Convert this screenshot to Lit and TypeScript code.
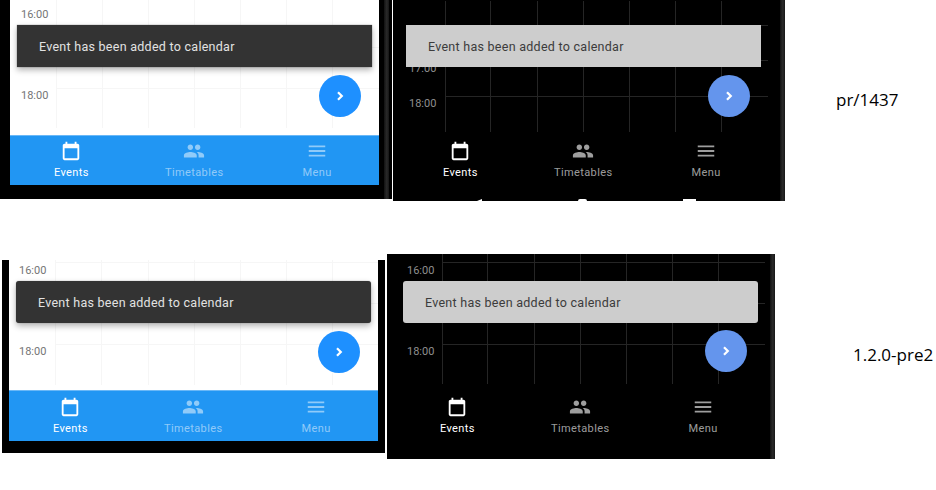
import { LitElement, html, css, svg } from "lit";
import { customElement, property } from "lit/decorators.js";

const calendar = svg`<path d="M19 4h-1V2h-2v2H8V2H6v2H5C3.9 4 3 4.9 3 6v14c0 1.1.9 2 2 2h14c1.1 0 2-.9 2-2V6c0-1.100-.9-2-2-2zm0 16H5V9h14v11z"/>`;
const people = svg`<path d="M16 11c1.660 0 2.990-1.340 2.990-3S17.660 5 16 5c-1.660 0-3 1.340-3 3s1.340 3 3 3zm-8 0c1.660 0 2.990-1.340 2.990-3S9.660 5 8 5C6.340 5 5 6.340 5 8s1.340 3 3 3zm0 2c-2.330 0-7 1.170-7 3.500V19h14v-2.500c0-2.330-4.670-3.500-7-3.500zm8 0c-.290 0-.620.020-.970.050 1.160.840 1.970 1.970 1.970 3.450V19h6v-2.500c0-2.330-4.670-3.500-7-3.500z"/>`;
const menu = svg`<path d="M3 18h18v-2H3v2zm0-5h18v-2H3v2zm0-7v2h18V6H3z"/>`;

interface Cfg {
  top: number; left: number; width: number; calH: number; navH: number; navLeft: number; padTop: number; lineH: number;
  edge: number; edgeRight: number;
  vlines: number[]; hlines: number[]; hLeft: number; hRight: number; times: [string, number][]; timeLeft: number;
  snackLeft: number; snackTop: number; fabLeft: number; fabTop: number;
}

const CONFIG: Record<string, Cfg> = {
  a: { top: 0, left: 10, width: 369, calH: 135, navH: 50, navLeft: 0, padTop: 4, lineH: 128, edge: 5, edgeRight: 3, vlines: [46, 92, 138, 184, 230, 276, 322], hlines: [47, 88], hLeft: 46, hRight: 0, times: [["16:00", 8], ["18:00", 89]], timeLeft: 11, snackLeft: 7, snackTop: 25, fabLeft: 309, fabTop: 75 },
  b: { top: 1, left: 5, width: 376, calH: 131, navH: 67, navLeft: 1, padTop: 8, lineH: 131, edge: 5, edgeRight: 0, vlines: [47, 92, 139, 185, 231, 277, 323], hlines: [24, 59, 95], hLeft: 47, hRight: 6, times: [["17:00", 61], ["18:00", 96]], timeLeft: 11, snackLeft: 8, snackTop: 24, fabLeft: 310, fabTop: 74 },
  c: { top: 0, left: 7, width: 369, calH: 130, navH: 51, navLeft: 0, padTop: 5, lineH: 125, edge: 0, edgeRight: 0, vlines: [46, 92, 139, 185, 231, 277, 323], hlines: [2, 43, 84], hLeft: 46, hRight: 0, times: [["16:00", 4], ["18:00", 85]], timeLeft: 10, snackLeft: 7, snackTop: 21, fabLeft: 309, fabTop: 71 },
  d: { top: 0, left: 2, width: 380, calH: 130, navH: 75, navLeft: 7, padTop: 12, lineH: 130, edge: 5, edgeRight: 0, vlines: [53, 98, 145, 191, 237, 283, 329], hlines: [8, 49, 90], hLeft: 53, hRight: 4, times: [["16:00", 10], ["18:00", 91]], timeLeft: 18, snackLeft: 14, snackTop: 27, fabLeft: 316, fabTop: 76 },
};

@customElement("phone-shot")
class PhoneShot extends LitElement {
  @property({ type: String }) variant = "a";
  @property({ type: Boolean }) dark = false;
  @property({ type: Boolean }) rounded = false;
  @property({ type: Boolean }) softkeys = false;

  static styles = css`
    :host { display: block; }
    .shot { display: flex; flex-direction: column; height: 100%; background: #000; position: relative; overflow: hidden; box-sizing: border-box; }
    .screen { flex: none; display: flex; flex-direction: column; position: relative; }
    .cal { flex: none; position: relative; overflow: hidden; background: #fff; }
    .dark .cal { background: #000; }
    .vline, .hline { position: absolute; background: #f6f6f6; }
    .dark .vline, .dark .hline { background: #252525; }
    .vline { width: 1px; top: 0; }
    .hline { height: 1px; }
    .time { position: absolute; font: 11px/14px Roboto, sans-serif; color: #757575; }
    .dark .time { color: #8f8f8f; }
    .snack { position: absolute; display: flex; align-items: center; box-sizing: border-box; width: 354.5px; height: 42px; padding: 2px 0 0 22px; background: #333; color: #e2e2e2; font: 12.500px/16px Roboto, sans-serif; letter-spacing: 0.270px; box-shadow: 0 3px 6px rgba(0,0,0,.3), 0 0 1px rgba(0,0,0,.5); }
    .dark .snack { background: #cdcdcd; color: #3c3c3c; box-shadow: none; }
    .rounded .snack { border-radius: 3px; }
    .fab { position: absolute; width: 42px; height: 42px; border-radius: 50%; background: #1e90ff; display: flex; align-items: center; justify-content: center; }
    .dark .fab { background: #6495ed; }
    .fab svg { width: 14px; height: 14px; fill: none; stroke: #fff; stroke-width: 2.200; }
    nav { flex: none; display: flex; box-sizing: border-box; width: 369px; padding-right: 0.500px; background: #2196f3; border-top: 1px solid #6ab8f7; }
    .dark nav { background: #000; border-top: 0; }
    .tab { flex: 1; display: flex; flex-direction: column; align-items: center; color: rgba(255,255,255,.5); font: 11px/14px Roboto, sans-serif; letter-spacing: 0.380px; }
    .dark .tab { color: rgba(255,255,255,.62); }
    .tab.on, .dark .tab.on { color: #fff; }
    .tab svg { width: 22px; height: 22px; fill: currentColor; margin-bottom: 4px; display: block; }
    .softkeys { flex: 1; position: relative; }
    .key { position: absolute; top: 0; height: 2px; background: #fff; }
    .back { left: 79px; width: 5px; clip-path: polygon(100% 0, 100% 100%, 0 100%); }
    .home { left: 180px; width: 9px; border-radius: 5px 5px 0 0; }
    .recent { left: 285px; width: 13px; }
    .edge { position: absolute; top: 0; bottom: 0; background: linear-gradient(90deg, #111, #2a2a2a 55%, #161616); }
  `;

  render() {
    const c = CONFIG[this.variant];
    const classes = `shot ${this.dark ? "dark" : ""} ${this.rounded ? "rounded" : ""}`;
    return html`<div class=${classes} style="padding:${c.top}px 0 0 ${c.left}px">
      <div class="screen" style="width:${c.width}px">
        <div class="cal" style="height:${c.calH}px">
          ${c.vlines.map((x) => html`<div class="vline" style="left:${x}px;height:${c.lineH}px"></div>`)}
          ${c.hlines.map((y) => html`<div class="hline" style="top:${y}px;left:${c.hLeft}px;right:${c.hRight}px"></div>`)}
          ${c.times.map((t) => html`<div class="time" style="left:${c.timeLeft}px;top:${t[1]}px">${t[0]}</div>`)}
        </div>
        <div class="snack" style="left:${c.snackLeft}px;top:${c.snackTop}px">Event has been added to calendar</div>
        <div class="fab" style="left:${c.fabLeft}px;top:${c.fabTop}px">
          <svg viewBox="0 0 14 14"><path d="M5 3.200 8.800 7 5 10.800"/></svg>
        </div>
        <nav style="height:${c.navH}px;margin-left:${c.navLeft}px;padding-top:${c.padTop}px">
          <div class="tab on"><svg viewBox="0 0 24 24">${calendar}</svg>Events</div>
          <div class="tab"><svg viewBox="0 0 24 24">${people}</svg>Timetables</div>
          <div class="tab"><svg viewBox="0 0 24 24">${menu}</svg>Menu</div>
        </nav>
      </div>
      ${this.softkeys
        ? html`<div class="softkeys">
            <div class="key back"></div>
            <div class="key home"></div>
            <div class="key recent"></div>
          </div>`
        : ""}
      ${c.edge ? html`<div class="edge" style="width:${c.edge}px;right:${c.edgeRight}px"></div>` : ""}
    </div>`;
  }
}

@customElement("app-root")
class AppRoot extends LitElement {
  static styles = css`
    :host { display: block; width: 936px; height: 490px; background: #fff; overflow: hidden; }
    .row { display: flex; align-items: flex-start; }
    .row1 { height: 254px; }
    .a { width: 392px; height: 199px; }
    .b { width: 392px; height: 201px; margin-left: 1px; }
    .c { width: 383px; height: 193px; margin: 6px 0 0 2px; }
    .d { width: 388px; height: 205px; margin-left: 2px; }
    .label { font: 17px/20px "Open Sans", "Liberation Sans", sans-serif; color: #000; white-space: nowrap; }
    .l1 { margin: 90px 0 0 51px; }
    .l2 { margin: 91px 0 0 78px; }
  `;
  render() {
    return html`
      <div class="row row1">
        <phone-shot class="a" variant="a"></phone-shot>
        <phone-shot class="b" variant="b" dark softkeys></phone-shot>
        <div class="label l1">pr/1437</div>
      </div>
      <div class="row">
        <phone-shot class="c" variant="c" rounded></phone-shot>
        <phone-shot class="d" variant="d" dark rounded></phone-shot>
        <div class="label l2">1.2.0-pre2</div>
      </div>`;
  }
}
